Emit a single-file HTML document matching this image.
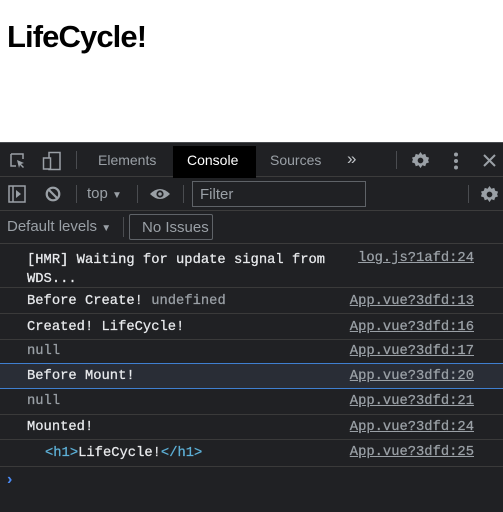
<!DOCTYPE html>
<html><head><style>
*{margin:0;padding:0;box-sizing:border-box}
body{width:503px;height:512px;overflow:hidden;background:#fff;font-family:"Liberation Sans",sans-serif;position:relative}
h1{position:absolute;left:7px;top:19px;font-size:31px;font-weight:bold;color:#000;letter-spacing:-0.9px}
#dt{position:absolute;left:0;top:142px;width:503px;height:370px;background:#202124;color:#9aa0a6;font-size:14px}
.bar{position:absolute;left:0;width:503px;border-bottom:1px solid #3c3c3c}
.a{position:absolute}
.row{position:absolute;left:0;width:503px;border-bottom:1px solid #3a3a3a;font-family:"Liberation Mono",monospace;font-size:13.8px;color:#e8eaed;-webkit-text-stroke:0.25px}
.row .t{position:absolute;left:27px}
.row .l{position:absolute;right:29px;color:#9aa0a6;text-decoration:underline}
.sep{position:absolute;width:1px;background:#4a4c50}
</style></head><body>
<h1>LifeCycle!</h1>
<div id="dt">
 <div class="bar" style="top:0;height:35px;border-top:1px solid #494c50">
  <svg class="a" style="left:9px;top:9px" width="18" height="18" viewBox="0 0 18 18"><path d="M2 2h12v5M2 2v12h5" fill="none" stroke="#9aa0a6" stroke-width="1.5"/><path d="M8 8l7 3-3 1 3 3-1 1-3-3-1 3z" fill="#9aa0a6"/></svg>
  <svg class="a" style="left:42px;top:8px" width="20" height="20" viewBox="0 0 20 20"><rect x="7" y="1.5" width="11" height="17" fill="none" stroke="#9aa0a6" stroke-width="1.5"/><rect x="1.5" y="7" width="7" height="11" fill="#202124" stroke="#9aa0a6" stroke-width="1.5"/></svg>
  <div class="sep" style="left:76px;top:8px;height:18px"></div>
  <div class="a" style="left:98px;top:9px">Elements</div>
  <div class="a" style="left:173px;top:3px;width:83px;height:32px;background:#000;color:#fff;padding:6px 0 0 14px">Console</div>
  <div class="a" style="left:270px;top:9px">Sources</div>
  <div class="a" style="left:347px;top:6px;font-size:17px;color:#c0c4c8">»</div>
  <div class="sep" style="left:396px;top:8px;height:18px"></div>
  <svg class="a" style="left:411px;top:8px" width="19" height="19" viewBox="0 0 20 20"><path d="M10 1l2 3 3-1 1 3 3 1-1 3 1 2-3 1-1 3-3-1-2 3-2-3-3 1-1-3-3-1 1-3-1-2 3-1 1-3 3 1z" fill="#9aa0a6"/><circle cx="10" cy="10" r="3" fill="#202124"/></svg>
  <svg class="a" style="left:453px;top:9px" width="6" height="18"><circle cx="3" cy="2.5" r="2" fill="#9aa0a6"/><circle cx="3" cy="9" r="2" fill="#9aa0a6"/><circle cx="3" cy="15.5" r="2" fill="#9aa0a6"/></svg>
  <svg class="a" style="left:483px;top:11px" width="13" height="13"><path d="M1 1l11 11M12 1L1 12" stroke="#9aa0a6" stroke-width="2"/></svg>
 </div>
 <div class="bar" style="top:35px;height:34px">
  <svg class="a" style="left:8px;top:8px" width="18" height="18" viewBox="0 0 18 18"><rect x="1" y="1" width="16" height="16" fill="none" stroke="#9aa0a6" stroke-width="1.5"/><path d="M5 1v16" stroke="#9aa0a6" stroke-width="1.5"/><path d="M8 5l5 4-5 4z" fill="#9aa0a6"/></svg>
  <svg class="a" style="left:45px;top:9px" width="16" height="16" viewBox="0 0 16 16"><circle cx="8" cy="8" r="6.3" fill="none" stroke="#9aa0a6" stroke-width="2.2"/><path d="M3.5 3.5l9 9" stroke="#9aa0a6" stroke-width="2.2"/></svg>
  <div class="sep" style="left:76px;top:8px;height:18px"></div>
  <div class="a" style="left:87px;top:8px;font-size:15px">top <span style="font-size:10px">▼</span></div>
  <div class="sep" style="left:137px;top:8px;height:18px"></div>
  <svg class="a" style="left:149px;top:10px" width="22" height="14" viewBox="0 0 22 14"><path d="M1 7Q11-3 21 7Q11 17 1 7z" fill="#9aa0a6"/><circle cx="11" cy="7" r="3.6" fill="#202124"/><circle cx="11" cy="7" r="1.8" fill="#9aa0a6"/></svg>
  <div class="sep" style="left:183px;top:8px;height:18px"></div>
  <div class="a" style="left:192px;top:4px;width:174px;height:26px;border:1px solid #5f6368;padding:4px 0 0 7px;color:#9aa0a6;font-size:15px">Filter</div>
  <div class="sep" style="left:468px;top:8px;height:18px"></div>
  <svg class="a" style="left:480px;top:8px" width="19" height="19" viewBox="0 0 20 20"><path d="M10 1l2 3 3-1 1 3 3 1-1 3 1 2-3 1-1 3-3-1-2 3-2-3-3 1-1-3-3-1 1-3-1-2 3-1 1-3 3 1z" fill="#9aa0a6"/><circle cx="10" cy="10" r="3" fill="#202124"/></svg>
 </div>
 <div class="bar" style="top:69px;height:33px">
  <div class="a" style="left:7px;top:7px;font-size:15px">Default levels <span style="font-size:10px">▼</span></div>
  <div class="sep" style="left:123px;top:6px;height:20px"></div>
  <div class="a" style="left:129px;top:3px;width:84px;height:26px;border:1px solid #5f6368;border-radius:2px;padding:4px 0 0 12px;font-size:15px">No Issues</div>
 </div>
 <div class="row" style="top:102px;height:44px"><div class="t" style="top:7px;line-height:19px">[HMR] Waiting for update signal from<br>WDS...</div><div class="l" style="top:7px">log.js?1afd:24</div></div>
 <div class="row" style="top:146px;height:26px"><div class="t" style="top:6px">Before Create! <span style="color:#9aa0a6">undefined</span></div><div class="l" style="top:6px">App.vue?3dfd:13</div></div>
 <div class="row" style="top:172px;height:26px"><div class="t" style="top:6px">Created! LifeCycle!</div><div class="l" style="top:6px">App.vue?3dfd:16</div></div>
 <div class="row" style="top:198px;height:24px;border-bottom:1px solid #3f7fd0"><div class="t" style="top:4px;color:#9aa0a6">null</div><div class="l" style="top:4px">App.vue?3dfd:17</div></div>
 <div class="row" style="top:222px;height:25px;background:#292d36;border-bottom:1px solid #3f7fd0"><div class="t" style="top:5px">Before Mount!</div><div class="l" style="top:5px">App.vue?3dfd:20</div></div>
 <div class="row" style="top:247px;height:26px"><div class="t" style="top:5px;color:#9aa0a6">null</div><div class="l" style="top:5px">App.vue?3dfd:21</div></div>
 <div class="row" style="top:273px;height:25px"><div class="t" style="top:5px">Mounted!</div><div class="l" style="top:5px">App.vue?3dfd:24</div></div>
 <div class="row" style="top:298px;height:27px"><div class="t" style="top:6px;left:45px"><span style="color:#5db0d7">&lt;h1&gt;</span>LifeCycle!<span style="color:#5db0d7">&lt;/h1&gt;</span></div><div class="l" style="top:5px">App.vue?3dfd:25</div></div>
 <div class="a" style="left:7px;top:329px;color:#4a8af4;font-size:16px;font-weight:bold">›</div>
</div>
</body></html>
